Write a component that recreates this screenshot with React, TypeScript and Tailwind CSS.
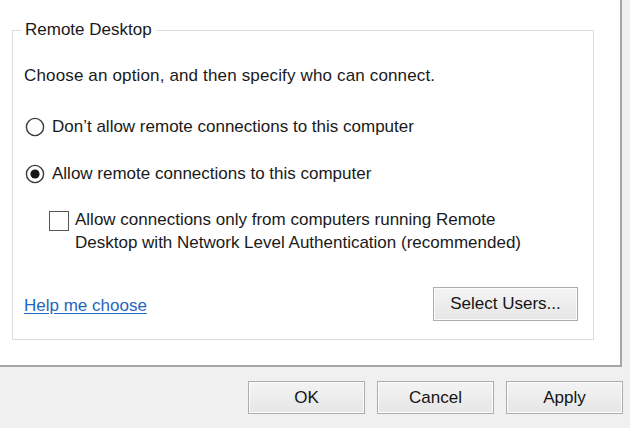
import React from "react";

function Radio({ checked }: { checked?: boolean }) {
  return (
    <svg width="20" height="20" viewBox="0 0 20 20" aria-hidden className="shrink-0">
      <circle cx="10" cy="10" r="8.6" fill="#fff" stroke="#3a3a3a" strokeWidth="1.4" />
      {checked && <circle cx="10" cy="10" r="4.6" fill="#161616" />}
    </svg>
  );
}

function WinButton({ children, className = "" }: { children: React.ReactNode; className?: string }) {
  return (
    <button
      className={`flex items-center justify-center border border-[#adadad] bg-gradient-to-b from-[#f4f4f4] to-[#e6e6e6] shadow-[inset_0_0_0_1px_#fbfbfb] text-[#141414] ${className}`}
    >
      {children}
    </button>
  );
}

export default function App() {
  return (
    <div
      className="w-[630px] h-[428px] bg-[#f0f0f0] overflow-hidden text-[17px] text-[#1a1a1a]"
      style={{ fontFamily: '"Liberation Sans", Arial, sans-serif' }}
    >
      {/* tab page */}
      <div className="w-[622px] h-[367px] bg-white border-r-2 border-b-2 border-[#a6a6a6] pt-[20px] pl-[12px]">
        <fieldset className="w-[582px] h-[320px] border border-[#dcdcdc]">
          <legend className="ml-[8px] px-[4px] leading-[20px]">Remote Desktop</legend>
          <div className="flex flex-col pl-[11px] pr-[15px]">
            <div className="mt-[26px] leading-[20px] tracking-[0.15px]">
              Choose an option, and then specify who can connect.
            </div>

            <label className="mt-[31px] flex items-center gap-[7px] leading-[20px] pl-[1px]">
              <Radio />
              <span>Don&#8217;t allow remote connections to this computer</span>
            </label>

            <label className="mt-[27px] flex items-center gap-[7px] leading-[20px] pl-[1px]">
              <Radio checked />
              <span>Allow remote connections to this computer</span>
            </label>

            <label className="mt-[24px] flex items-start gap-[6px] pl-[25px] leading-[23px]">
              <span className="mt-[3px] w-[20px] h-[20px] shrink-0 border border-[#555] bg-white" />
              <span>
                Allow connections only from computers running Remote
                <br />
                Desktop with Network Level Authentication (recommended)
              </span>
            </label>

            <div className="mt-[33px] flex items-center justify-between">
              <a href="#" className="mt-[4px] text-[#1f66c1] underline underline-offset-2">
                Help me choose
              </a>
              <WinButton className="w-[145px] h-[34px]">Select Users...</WinButton>
            </div>
          </div>
        </fieldset>
      </div>

      {/* dialog buttons */}
      <div className="flex justify-end gap-[12px] pr-[7px] mt-[14px]">
        <WinButton className="w-[117px] h-[33px]">OK</WinButton>
        <WinButton className="w-[117px] h-[33px]">Cancel</WinButton>
        <WinButton className="w-[117px] h-[33px]">Apply</WinButton>
      </div>
    </div>
  );
}
